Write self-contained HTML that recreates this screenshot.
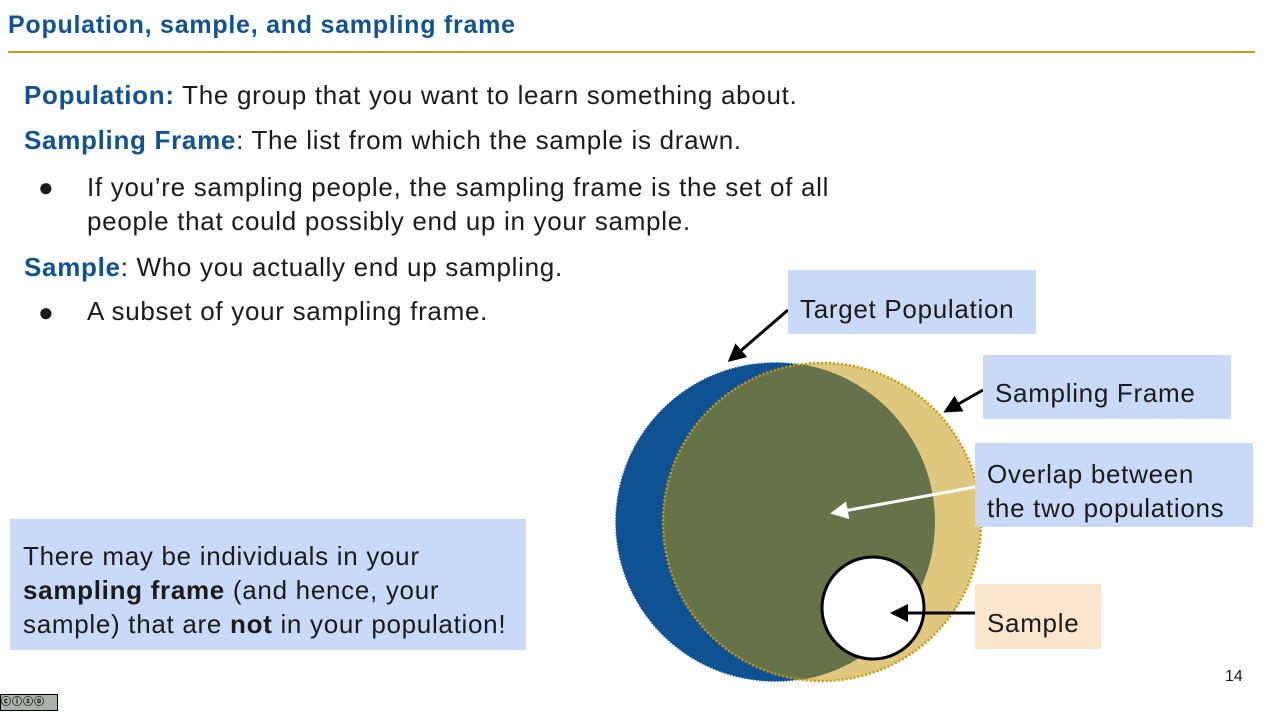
<!DOCTYPE html>
<html><head><meta charset="utf-8"><style>
body{margin:0;width:1267px;height:712px;background:#fff;position:relative;overflow:hidden;font-family:"Liberation Sans",sans-serif;color:#1b1b1b}
.a{position:absolute;white-space:nowrap}
h1{position:absolute;left:8px;top:11px;margin:0;font-size:25px;color:#0f5394;font-weight:bold;letter-spacing:0.75px}
.rule{position:absolute;left:8px;top:51px;width:1247px;height:2px;background:#c59c1a}
.t{font-size:26px;letter-spacing:0.7px}
b.bl{color:#0f5394}
.box{position:absolute;background:#c9daf8;font-size:26px;letter-spacing:0.7px;line-height:34px;padding:0 12px;box-sizing:border-box;white-space:nowrap}
</style></head><body>
<h1>Population, sample, and sampling frame</h1>
<div class="rule"></div>
<div class="a t" style="left:24px;top:80px"><b class="bl">Population:</b> The group that you want to learn something about.</div>
<div class="a t" style="left:24px;top:125px"><b class="bl">Sampling Frame</b>: The list from which the sample is drawn.</div>
<div class="a t" style="left:38px;top:172px">●</div>
<div class="a t" style="left:87px;top:170px;line-height:34px">If you’re sampling people, the sampling frame is the set of all<br>people that could possibly end up in your sample.</div>
<div class="a t" style="left:24px;top:252px"><b class="bl">Sample</b>: Who you actually end up sampling.</div>
<div class="a t" style="left:38px;top:297px">●</div>
<div class="a t" style="left:87px;top:296px">A subset of your sampling frame.</div>
<div class="box" style="left:10px;top:519px;width:516px;height:131px;padding:20px 13px;line-height:34px">There may be individuals in your<br><b>sampling frame</b> (and hence, your<br>sample) that are <b>not</b> in your population!</div>
<svg class="a" style="left:0;top:0" width="1267" height="712">
<defs><clipPath id="c"><circle cx="775" cy="522" r="160"/></clipPath>
<marker id="m" markerWidth="6" markerHeight="6" refX="5" refY="3" orient="auto"><path d="M0,0L6,3L0,6z" fill="#000"/></marker>
<marker id="w" markerWidth="6" markerHeight="6" refX="5" refY="3" orient="auto"><path d="M0,0L6,3L0,6z" fill="#fff"/></marker></defs>
<circle cx="775" cy="522" r="160" fill="#0e5293" stroke="#fff" stroke-width="1.5" stroke-dasharray="2 1"/>
<circle cx="822" cy="522" r="159" fill="#e0c77e"/>
<circle cx="822" cy="522" r="159" fill="#667349" clip-path="url(#c)"/>
<circle cx="822" cy="522" r="159" fill="none" stroke="#c8960c" stroke-width="2.5" stroke-dasharray="2 2"/>
<circle cx="873" cy="608" r="51" fill="#fff" stroke="#000" stroke-width="3"/>
<line x1="788" y1="310" x2="730" y2="360" stroke="#000" stroke-width="3" marker-end="url(#m)"/>
<line x1="983" y1="390" x2="946" y2="411" stroke="#000" stroke-width="3" marker-end="url(#m)"/>
<line x1="975" y1="487" x2="833" y2="513" stroke="#fff" stroke-width="3" marker-end="url(#w)"/>
<line x1="976" y1="613" x2="893" y2="613" stroke="#000" stroke-width="3" marker-end="url(#m)"/>
</svg>
<div class="box" style="left:788px;top:270px;width:248px;height:64px;padding-top:22px">Target Population</div>
<div class="box" style="left:983px;top:355px;width:248px;height:64px;padding-top:21px">Sampling Frame</div>
<div class="box" style="left:975px;top:443px;width:278px;height:84px;padding-top:14px">Overlap between<br>the two populations</div>
<div class="box" style="left:975px;top:584px;width:126px;height:65px;background:#fce5cd;padding-top:22px">Sample</div>
<div class="a" style="left:1225px;top:668px;font-size:16px">14</div>
<div class="a" style="left:0;top:694px;width:58px;height:17px;background:#aab2ab;border:1px solid #000;box-sizing:border-box;font-size:10px;line-height:15px;font-weight:bold;letter-spacing:1px">ⓒⓘⓢⓞ</div>
</body></html>
